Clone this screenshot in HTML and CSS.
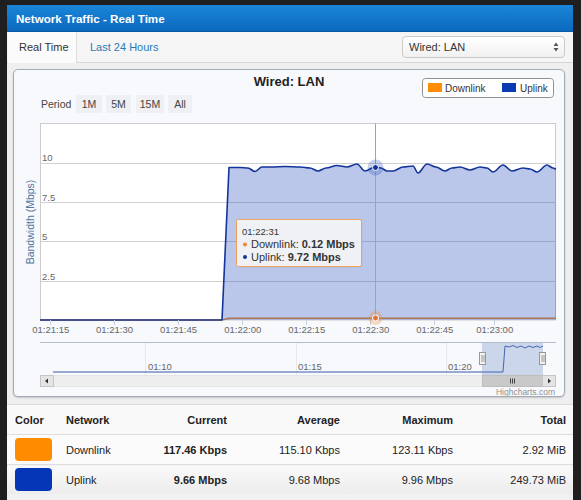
FILE: index.html
```html
<!DOCTYPE html>
<html>
<head>
<meta charset="utf-8">
<title>Network Traffic - Real Time</title>
<link rel="stylesheet" href="styles.css">
</head>
<body>
<div class="panel">
  <div class="header">Network Traffic - Real Time</div>
  <div class="tabbar">
    <div class="tab active">Real Time</div>
    <div class="tab link">Last 24 Hours</div>
    <div class="select">
      <span>Wired: LAN</span>
      <svg class="sel-arrows" width="6" height="10" viewBox="0 0 6 10"><path d="M3 0.5 L5.5 4 H0.5 Z M3 9.5 L5.5 6 H0.5 Z" fill="#555"/></svg>
    </div>
  </div>
  <div class="pane">
    <div class="chart">
      <svg class="chart-svg" width="550" height="326" viewBox="14 70 550 326">
        <!-- title -->
        <text x="289" y="86" class="c-title" text-anchor="middle">Wired: LAN</text>
        <!-- legend -->
        <rect x="422.5" y="78.5" width="131" height="19" rx="3" fill="#fff" stroke="#909090"/>
        <rect x="428" y="83" width="14" height="9" fill="#fd8c07"/>
        <text x="445" y="92" class="c-leg">Downlink</text>
        <rect x="502" y="83" width="14" height="9" fill="#0a3bb3"/>
        <text x="520" y="92" class="c-leg">Uplink</text>
        <!-- range selector -->
        <text x="41" y="108" class="c-btn">Period</text>
        <rect x="76" y="95" width="26" height="18" fill="#eef0f3"/>
        <text x="89" y="108" class="c-btn" text-anchor="middle">1M</text>
        <rect x="106" y="95" width="25" height="18" fill="#eef0f3"/>
        <text x="118.5" y="108" class="c-btn" text-anchor="middle">5M</text>
        <rect x="136" y="95" width="28" height="18" fill="#eef0f3"/>
        <text x="150" y="108" class="c-btn" text-anchor="middle">15M</text>
        <rect x="168" y="95" width="24" height="18" fill="#eef0f3"/>
        <text x="180" y="108" class="c-btn" text-anchor="middle">All</text>
        <!-- plot area -->
        <rect x="40.5" y="123.5" width="515" height="196.5" fill="#fff" stroke="#cccccc"/>
        <g stroke="#d0d0d0" stroke-width="1">
          <line x1="41" y1="163.5" x2="556" y2="163.5"/>
          <line x1="41" y1="202.5" x2="556" y2="202.5"/>
          <line x1="41" y1="241.5" x2="556" y2="241.5"/>
          <line x1="41" y1="281.5" x2="556" y2="281.5"/>
        </g>
        <g class="c-axis">
          <text x="42" y="161">10</text>
          <text x="42" y="201">7.5</text>
          <text x="42" y="240">5</text>
          <text x="42" y="279.5">2.5</text>
        </g>
        <text class="c-ytitle" transform="translate(34,222) rotate(-90)" text-anchor="middle">Bandwidth (Mbps)</text>
        <!-- downlink series -->
        <polyline points="40,320 222,320 229,318.2 556,318.2" fill="none" stroke="#f08a2a" stroke-width="1.5"/>
        <!-- uplink series area -->
        <path d="M40,320 L222,320 L229,167.5 C232.7,167.5 236.3,167.5 240,167.5 C242.7,167.5 245.3,168 248,168 C250.3,168 252.7,171.5 255,171.5 C257.3,171.5 259.7,167 262,167 C265.3,167 268.7,167 272,167 C276.3,167 280.7,166.5 285,166.5 C290,166.5 295,167 300,167 C303.3,167 306.7,168 310,168 C312.7,168 315.3,171 318,171 C320.7,171 323.3,168 326,168 C329.7,168 333.3,165.5 337,165.5 C340.3,165.5 343.7,167 347,167 C350.3,167 353.7,164 357,164 C359.7,164 362.3,171 365,171 C368.3,171 371.7,167 375,167 C377,167 379,168 381,168 C383,168 385,171 387,171 C389,171 391,171 393,171 C396.3,171 399.7,167 403,167 C406.3,167 409.7,166 413,166 C414.7,166 416.3,173 418,173 C421,173 424,164 427,164 C430,164 433,167 436,167 C439,167 442,171 445,171 C447.3,171 449.7,168 452,168 C454.7,168 457.3,167 460,167 C463.3,167 466.7,170 470,170 C473.3,170 476.7,167 480,167 C482.3,167 484.7,168 487,168 C489,168 491,172 493,172 C496.3,172 499.7,165 503,165 C506,165 509,171 512,171 C515.7,171 519.3,168 523,168 C525.3,168 527.7,169 530,169 C532.3,169 534.7,172 537,172 C540.3,172 543.7,165 547,165 C549,165 551,168 553,168 C554,168 555,169 556,169 L556,320 Z" fill="#1c46b8" fill-opacity="0.3"/>
        <!-- uplink series line -->
        <path d="M40,320 L222,320 L229,167.5 C232.7,167.5 236.3,167.5 240,167.5 C242.7,167.5 245.3,168 248,168 C250.3,168 252.7,171.5 255,171.5 C257.3,171.5 259.7,167 262,167 C265.3,167 268.7,167 272,167 C276.3,167 280.7,166.5 285,166.5 C290,166.5 295,167 300,167 C303.3,167 306.7,168 310,168 C312.7,168 315.3,171 318,171 C320.7,171 323.3,168 326,168 C329.7,168 333.3,165.5 337,165.5 C340.3,165.5 343.7,167 347,167 C350.3,167 353.7,164 357,164 C359.7,164 362.3,171 365,171 C368.3,171 371.7,167 375,167 C377,167 379,168 381,168 C383,168 385,171 387,171 C389,171 391,171 393,171 C396.3,171 399.7,167 403,167 C406.3,167 409.7,166 413,166 C414.7,166 416.3,173 418,173 C421,173 424,164 427,164 C430,164 433,167 436,167 C439,167 442,171 445,171 C447.3,171 449.7,168 452,168 C454.7,168 457.3,167 460,167 C463.3,167 466.7,170 470,170 C473.3,170 476.7,167 480,167 C482.3,167 484.7,168 487,168 C489,168 491,172 493,172 C496.3,172 499.7,165 503,165 C506,165 509,171 512,171 C515.7,171 519.3,168 523,168 C525.3,168 527.7,169 530,169 C532.3,169 534.7,172 537,172 C540.3,172 543.7,165 547,165 C549,165 551,168 553,168 C554,168 555,169 556,169" fill="none" stroke="#13349a" stroke-width="1.6" stroke-linejoin="round"/>
        <!-- x axis -->
        <g stroke="#c0d0e0">
          <line x1="50.5" y1="320" x2="50.5" y2="325"/>
          <line x1="114.5" y1="320" x2="114.5" y2="325"/>
          <line x1="178.5" y1="320" x2="178.5" y2="325"/>
          <line x1="242.5" y1="320" x2="242.5" y2="325"/>
          <line x1="306.5" y1="320" x2="306.5" y2="325"/>
          <line x1="370.5" y1="320" x2="370.5" y2="325"/>
          <line x1="434.5" y1="320" x2="434.5" y2="325"/>
          <line x1="494.5" y1="320" x2="494.5" y2="325"/>
        </g>
        <g class="c-axis" text-anchor="middle">
          <text x="50.8" y="332.5">01:21:15</text>
          <text x="114.5" y="332.5">01:21:30</text>
          <text x="178.5" y="332.5">01:21:45</text>
          <text x="242.8" y="332.5">01:22:00</text>
          <text x="306.7" y="332.5">01:22:15</text>
          <text x="370.8" y="332.5">01:22:30</text>
          <text x="434.8" y="332.5">01:22:45</text>
          <text x="494.7" y="332.5">01:23:00</text>
        </g>
        <!-- crosshair and hover markers -->
        <line x1="375.5" y1="123.5" x2="375.5" y2="320" stroke="#9aa3bd" stroke-width="1"/>
        <circle cx="375.5" cy="167.5" r="8" fill="#1c46b8" fill-opacity="0.25"/>
        <circle cx="375.5" cy="167.5" r="3" fill="#13349a" stroke="#ffffff" stroke-width="1"/>
        <circle cx="375.5" cy="318" r="7" fill="#f08a2a" fill-opacity="0.3"/>
        <circle cx="375.5" cy="318" r="3" fill="#d9773a" stroke="#ffffff" stroke-width="1"/>
        <!-- tooltip -->
        <rect x="237.5" y="220.5" width="125" height="47" rx="2" fill="#000" fill-opacity="0.06"/>
        <rect x="236.5" y="219.5" width="125" height="47" rx="2" fill="#f7f7f7" fill-opacity="0.9" stroke="#f0a25a"/>
        <text x="242" y="235" class="c-tip-time">01:22:31</text>
        <circle cx="245" cy="244.5" r="2" fill="#f08a2a"/>
        <text x="251" y="248" class="c-tip">Downlink: <tspan class="b">0.12 Mbps</tspan></text>
        <circle cx="245" cy="257" r="2" fill="#13349a"/>
        <text x="251" y="260.5" class="c-tip">Uplink: <tspan class="b">9.72 Mbps</tspan></text>
        <!-- navigator -->
        <g stroke="#e6e8ef">
          <line x1="145.5" y1="342" x2="145.5" y2="375"/>
          <line x1="296.5" y1="342" x2="296.5" y2="375"/>
          <line x1="446.5" y1="342" x2="446.5" y2="375"/>
        </g>
        <line x1="40" y1="342.5" x2="556" y2="342.5" stroke="#b3bccb"/>
        <g class="c-axis">
          <text x="148" y="370">01:10</text>
          <text x="298" y="370">01:15</text>
          <text x="448" y="370">01:20</text>
        </g>
        <polyline points="53,372 503,372 505,346 509,347 513,345.5 517,347.5 521,346 525,348 529,346 533,347.5 537,346 540,347.5 543,346" fill="none" stroke="#3a58a8" stroke-width="1"/>
        <rect x="482" y="343" width="61" height="32" fill="#6685c2" fill-opacity="0.3"/>
        <g fill="#f2f2f2" stroke="#999">
          <rect x="479.5" y="352.5" width="6" height="12"/>
          <rect x="539.5" y="352.5" width="6" height="12"/>
        </g>
        <g stroke="#999">
          <line x1="482" y1="355" x2="482" y2="362"/>
          <line x1="484" y1="355" x2="484" y2="362"/>
          <line x1="542" y1="355" x2="542" y2="362"/>
          <line x1="544" y1="355" x2="544" y2="362"/>
        </g>
        <!-- scrollbar -->
        <rect x="40.5" y="375.5" width="515" height="11" fill="#eeeeee" stroke="#e4e4e4"/>
        <rect x="40.5" y="375.5" width="13" height="11" fill="#e4e4e4" stroke="#c6c6c6"/>
        <path d="M48 378.5 L48 383.5 L45 381 Z" fill="#333"/>
        <rect x="482.5" y="375.5" width="60" height="11" fill="#c9c9c9" stroke="#bdbdbd"/>
        <g stroke="#444">
          <line x1="510.5" y1="378.5" x2="510.5" y2="383.5"/>
          <line x1="512.5" y1="378.5" x2="512.5" y2="383.5"/>
          <line x1="514.5" y1="378.5" x2="514.5" y2="383.5"/>
        </g>
        <rect x="542.5" y="375.5" width="13" height="11" fill="#e4e4e4" stroke="#c6c6c6"/>
        <path d="M548 378.5 L548 383.5 L551 381 Z" fill="#333"/>
        <text x="555" y="395" class="c-credit" text-anchor="end">Highcharts.com</text>
      </svg>
    </div>
  </div>
  <table class="stats">
    <colgroup>
      <col class="w-color"><col class="w-net"><col class="w-num"><col class="w-num"><col class="w-num"><col class="w-num">
    </colgroup>
    <thead>
      <tr><th class="l">Color</th><th class="l">Network</th><th>Current</th><th>Average</th><th>Maximum</th><th>Total</th></tr>
    </thead>
    <tbody>
      <tr><td class="l"><span class="swatch orange"></span></td><td class="l">Downlink</td><td class="b">117.46 Kbps</td><td>115.10 Kbps</td><td>123.11 Kbps</td><td>2.92 MiB</td></tr>
      <tr class="last"><td class="l"><span class="swatch blue"></span></td><td class="l">Uplink</td><td class="b">9.66 Mbps</td><td>9.68 Mbps</td><td>9.96 Mbps</td><td>249.73 MiB</td></tr>
    </tbody>
  </table>
</div>
</body>
</html>
```
FILE: styles.css
```css
html, body {
  margin: 0;
  padding: 0;
  background: #1f1f1f;
}
body {
  padding: 5px 0 0 7px;
  font-family: "Liberation Sans", Arial, sans-serif;
  color: #333;
  height: 500px;
  box-sizing: border-box;
  overflow: hidden;
}
.panel {
  width: 566px;
  background: #f1f1f1;
  height: 495px;
}
.header {
  height: 27px;
  line-height: 27px;
  padding-left: 9px;
  background: linear-gradient(#1a86d8, #0b69bf);
  color: #fff;
  font-weight: bold;
  font-size: 11.6px;
  border-bottom: 1px solid #0a5aa4;
  box-sizing: border-box;
}
.tabbar {
  display: flex;
  height: 31px;
  background: #f5f5f5;
  border-bottom: 1px solid #d6d6d6;
  box-sizing: border-box;
}
.tab {
  font-size: 11px;
  line-height: 30px;
}
.tab.active {
  margin-left: 1px;
  width: 69px;
  padding-left: 11px;
  box-sizing: border-box;
  background: #fbfbfb;
  border-right: 1px solid #dcdcdc;
  height: 31px;
}
.tab.link {
  padding-left: 13px;
  color: #2a7bb5;
}
.select {
  margin-left: auto;
  margin-right: 8px;
  margin-top: 4px;
  width: 163px;
  height: 22px;
  box-sizing: border-box;
  border: 1px solid #cacaca;
  border-radius: 4px;
  background: linear-gradient(#ffffff, #f1f1f1);
  display: flex;
  align-items: center;
  justify-content: space-between;
  padding: 0 5px 0 6px;
  font-size: 11px;
  color: #333;
}
.sel-arrows {
  display: block;
}
.pane {
  padding: 6px 8px 7px 6px;
  background: #efefef;
}
.chart {
  width: 552px;
  height: 328px;
  box-sizing: border-box;
  border: 1px solid #a3aab7;
  border-radius: 5px;
  background: #f8f9fd;
  box-shadow: 0 1px 2px rgba(0, 0, 0, 0.18);
  overflow: hidden;
}
.chart-svg {
  display: block;
  font-family: "Liberation Sans", Arial, sans-serif;
}
.c-title {
  font-size: 13px;
  font-weight: bold;
  fill: #222;
}
.c-leg {
  font-size: 10px;
  fill: #333;
}
.c-btn {
  font-size: 10.5px;
  fill: #444;
}
.c-axis text,
.c-axis {
  font-size: 9.5px;
  fill: #666;
}
.c-ytitle {
  font-size: 10.5px;
  fill: #4d759e;
}
.c-tip-time {
  font-size: 9.5px;
  fill: #333;
}
.c-tip {
  font-size: 11px;
  fill: #333;
}
.c-tip .b {
  font-weight: bold;
}
.c-credit {
  font-size: 8.5px;
  fill: #909090;
}
.stats {
  width: 566px;
  border-collapse: collapse;
  table-layout: fixed;
  font-size: 11px;
  color: #222;
  background: #fafafa;
}
.w-color { width: 51px; }
.w-net { width: 63px; }
.w-num { width: 113px; }
.stats th,
.stats td {
  padding: 0 7px 0 8px;
  text-align: right;
  white-space: nowrap;
}
.stats th {
  height: 29px;
  font-weight: bold;
  border-top: 1px solid #dcdcdc;
  background: #f9f9f9;
}
.stats td {
  height: 29px;
  border-top: 1px solid #dedede;
  background: #fbfbfb;
}
.stats tr.last td {
  background: linear-gradient(#f9f9f9, #ececec);
}
.stats .l {
  text-align: left;
}
.stats .b {
  font-weight: bold;
}
.swatch {
  display: block;
  width: 37px;
  height: 23px;
  border-radius: 4px;
}
.swatch.orange { background: #ff8c00; }
.swatch.blue { background: #0536b5; }
```
